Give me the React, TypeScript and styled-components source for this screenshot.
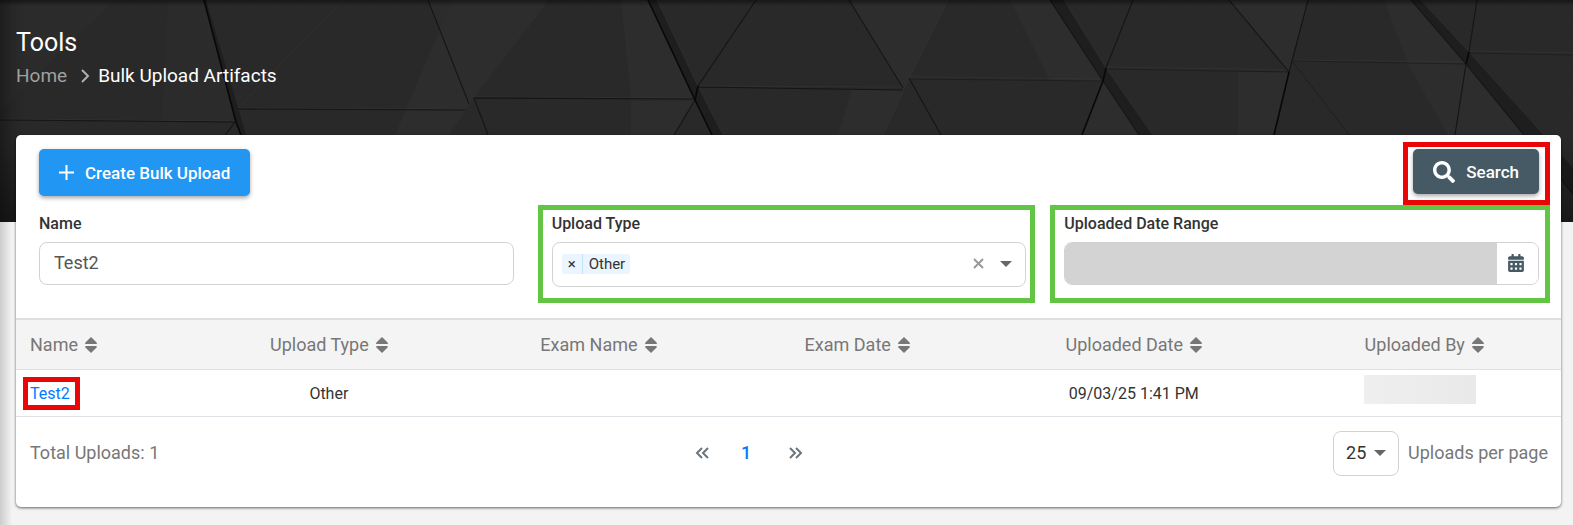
import React, { useState } from "react";
import styled, { createGlobalStyle } from "styled-components";
import { FaCalendarAlt, FaSearch } from "react-icons/fa";

const GlobalStyle = createGlobalStyle`
  *, *::before, *::after { box-sizing: border-box; }
  body {
    margin: 0;
    background: #f3f3f3;
    color: #333;
    font: 16px/24px Roboto, "Liberation Sans", sans-serif;
  }
  button, input, select { font: inherit; }
`;

const RED = "#ea0606";
const GREEN = "#62c544";

const Page = styled.div`
  position: relative;
  min-height: 100vh;
  padding-bottom: 18px;
`;

const EdgeShadow = styled.div`
  position: absolute;
  inset: 0 auto 0 0;
  width: 12px;
  background: linear-gradient(to right, rgba(0, 0, 0, 0.16), rgba(0, 0, 0, 0));
  pointer-events: none;
`;

const Banner = styled.div`
  position: absolute;
  inset: 0 0 auto 0;
  height: 222px;
  background: #292929;
  overflow: hidden;

  svg { display: block; width: 100%; height: 100%; }
`;

const PageHeader = styled.header`
  position: relative;
  padding: 27px 16px 0;
  height: 135px;
  color: #fff;
`;

const Title = styled.h1`
  margin: 0;
  font-size: 25px;
  line-height: 32px;
  font-weight: 400;
`;

const Breadcrumb = styled.nav`
  display: flex;
  align-items: center;
  gap: 14px;
  margin-top: 5px;
  font-size: 19px;
  line-height: 24px;

  a { color: #a0a0a0; text-decoration: none; }
  svg { display: block; margin-right: -6px; }
`;

const Card = styled.main`
  position: relative;
  margin: 0 12px 0 16px;
  background: #fff;
  border-radius: 5px;
  box-shadow: 0 1px 3px rgba(0, 0, 0, 0.6);
`;

const Filters = styled.form`
  padding: 14px 22px 31px 23px;
`;

const Toolbar = styled.div`
  display: flex;
  justify-content: space-between;
  align-items: flex-start;
  height: 63px;
`;

const Mark = styled.div<{ $color: string; $inset: string }>`
  position: relative;

  &::after {
    content: "";
    position: absolute;
    inset: ${(p) => p.$inset};
    border: 5px solid ${(p) => p.$color};
    pointer-events: none;
  }
`;

const ActionButton = styled.button<{ $bg: string; $height: number }>`
  display: flex;
  align-items: center;
  gap: 11px;
  height: ${(p) => p.$height}px;
  padding: 0 20px;
  border: 0;
  border-radius: 5px;
  background: ${(p) => p.$bg};
  color: #fff;
  font-size: 17px;
  font-weight: 500;
  box-shadow: 0 2px 4px rgba(0, 0, 0, 0.35);
  cursor: pointer;
`;

const FieldGrid = styled.div`
  display: grid;
  grid-template-columns: repeat(3, minmax(0, 1fr));
  column-gap: 38px;
  align-items: start;
`;

const Label = styled.label`
  display: block;
  margin-bottom: 6px;
  font-size: 16px;
  line-height: 24px;
  font-weight: 500;
`;

const TextInput = styled.input`
  display: block;
  width: 100%;
  height: 43px;
  padding: 0 14px 2px;
  border: 1px solid #d2d2d2;
  border-radius: 8px;
  background: #fff;
  color: #555;
  font-size: 18px;
`;

const MultiSelect = styled.div`
  display: flex;
  align-items: center;
  height: 45px;
  padding: 0 13px 2px 9px;
  border: 1px solid #d2d2d2;
  border-radius: 8px;
`;

const Tag = styled.span`
  display: flex;
  height: 20px;
  border-radius: 2px;
  background: #ebf5ff;
  font-size: 15px;
  line-height: 20px;

  button {
    width: 21px;
    padding: 0;
    border: 0;
    border-right: 1px solid #c2e0ff;
    background: none;
    color: #333;
    line-height: 20px;
  }
  span { padding: 0 5px 0 6px; }
`;

const TypeInput = styled.input`
  flex: 1;
  min-width: 0;
  border: 0;
  outline: 0;
  background: none;
`;

const PlainButton = styled.button`
  display: flex;
  padding: 0;
  border: 0;
  background: none;
  color: #999;
  cursor: pointer;

  & + & { margin-left: 16px; color: #666; }
`;

const DateGroup = styled.div`
  display: flex;
  height: 43px;
  border: 1px solid #d2d2d2;
  border-radius: 8px;
  overflow: hidden;

  input { flex: 1; min-width: 0; border: 0; background: #d3d3d3; }
  button {
    display: flex;
    align-items: center;
    justify-content: center;
    width: 41px;
    padding: 0 2px 2px 0;
    border: 0;
    background: #fff;
    color: #455a64;
  }
`;

const Table = styled.table`
  width: 100%;
  table-layout: fixed;
  border-collapse: collapse;
  text-align: center;

  th {
    height: 50px;
    padding: 2px 0 0;
    border-top: 2px solid #dfdfdf;
    border-bottom: 1px solid #dfe0e2;
    background: #f4f4f4;
    font-weight: 400;
  }
  td {
    height: 47px;
    padding: 2px 0 0;
    border-bottom: 1px solid #dee2e6;
    font-size: 16px;
  }
  th:first-child, td:first-child { padding-left: 14px; text-align: left; }
`;

const SortButton = styled.button`
  display: inline-flex;
  align-items: center;
  gap: 7px;
  padding: 0;
  border: 0;
  background: none;
  color: #777;
  font-size: 18px;
  line-height: 24px;
  cursor: pointer;
`;

const RowLink = styled.a`
  color: #007bff;
  text-decoration: none;
`;

const InlineMark = styled(Mark)`
  display: inline-block;
`;

const RedactedCell = styled.div`
  display: flex;
  justify-content: center;
  padding: 0 8px 8px 0;
`;

const Redacted = styled.div`
  width: 112px;
  height: 29px;
  background: linear-gradient(to right, #f0efef, #e9e9e9);
`;

const Footer = styled.footer`
  display: flex;
  justify-content: space-between;
  align-items: center;
  padding: 14px 13px 31px 14px;
  color: #777;
  font-size: 18px;
  line-height: 24px;
`;

const Pager = styled.nav`
  display: flex;
  align-items: center;
  gap: 32px;
  padding-left: 6px;
  color: #6c757d;

  a { display: flex; color: inherit; text-decoration: none; }
  a[aria-current] { padding-right: 6px; color: #007bff; font-weight: 500; }
`;

const PageSize = styled.label`
  display: flex;
  justify-content: flex-end;
  align-items: center;
  gap: 9px;
`;

const SelectBox = styled.span`
  display: grid;
  align-items: center;
  width: 66px;
  height: 45px;

  select, svg { grid-area: 1 / 1; }
  select {
    width: 100%;
    height: 100%;
    padding: 0 12px;
    appearance: none;
    border: 1px solid #d2d2d2;
    border-radius: 8px;
    background: #fff;
    color: #333;
  }
  svg { justify-self: end; margin-right: 13px; pointer-events: none; color: #666; }
`;

const Caret = () => (
  <svg width="12" height="6" viewBox="0 0 12 6" aria-hidden="true">
    <path d="M0 0H12L6 6Z" fill="currentColor" />
  </svg>
);

const SortIcon = () => (
  <svg width="12" height="16" viewBox="0 0 12 16" aria-hidden="true">
    <path d="M6 0L11.6 5.6Q12.4 7 11 7H1Q-.4 7 .4 5.6ZM6 16L.4 10.4Q-.4 9 1 9H11Q12.4 9 11.6 10.4Z" fill="currentColor" />
  </svg>
);

const DoubleChevron = ({ flip }: { flip?: boolean }) => (
  <svg width="14" height="12" viewBox="0 0 14 12" fill="none" stroke="currentColor" strokeWidth="2" aria-hidden="true">
    <path d={flip ? "M1 1L6 6L1 11M7 1L12 6L7 11" : "M7 1L2 6L7 11M13 1L8 6L13 11"} />
  </svg>
);

const Facets = () => (
  <svg viewBox="0 0 1573 222" preserveAspectRatio="xMidYMin slice" aria-hidden="true">
    <defs>
      <pattern id="weave" width="3" height="3" patternUnits="userSpaceOnUse">
        <path d="M0 3L3 0" stroke="#222" strokeWidth="1" />
      </pattern>
      <linearGradient id="top" x1="0" y1="0" x2="0" y2="1">
        <stop offset="0" stopColor="#000" stopOpacity=".45" />
        <stop offset="1" stopColor="#000" stopOpacity="0" />
      </linearGradient>
      <linearGradient id="side" x1="0" y1="0" x2="1" y2="0">
        <stop offset="0" stopColor="#000" stopOpacity=".2" />
        <stop offset="1" stopColor="#000" stopOpacity="0" />
      </linearGradient>
      <linearGradient id="bottom" x1="0" y1="0" x2="0" y2="1">
        <stop offset="0" stopColor="#000" stopOpacity="0" />
        <stop offset="1" stopColor="#000" stopOpacity=".4" />
      </linearGradient>
    </defs>
    <rect width="1573" height="222" fill="#2a2a2a" />
    <rect width="1573" height="222" fill="url(#weave)" opacity=".4" />
    <g fill="#2d2d2d">
      <path d="M0 0H115L0 110Z" opacity=".5" />
      <path d="M168 0H204L236 121L162 121Z" opacity=".5" />
      <path d="M452 0H549L474 98L449 135H395Z" />
      <path d="M428 0H455L405 110H465L469 104Z" opacity=".7" />
      <path d="M621 0H648L695 100H631Z" />
      <path d="M631 101H695L674 135H631Z" />
      <path d="M866 0H948L909 78L883 135H838L852 90H903L849 0Z" />
      <path d="M1010 0H1050L1103 81H1050Z" />
      <path d="M1103 81L1139 135H1082Z" />
      <path d="M1229 0H1308L1292 61L1289 72Z" />
      <path d="M1238 72H1289L1274 135H1238Z" />
      <path d="M1384 0H1411L1466 64H1408Z" />
      <path d="M1408 64H1466L1455 135H1448Z" />
      <path d="M1466 64L1524 135H1455Z" />
    </g>
    <g fill="#1e1e1e">
      <path d="M204 0H206L238 108L246 135H241L235 122Z" />
      <path d="M648 0H657L698 86L723 135H712L695 100Z" />
      <path d="M1050 0H1064L1106 68L1153 135H1139L1103 81Z" />
      <path d="M1411 0H1421L1469 52L1544 135L1573 167V194L1524 135L1466 64Z" />
    </g>
    <g fill="none" stroke="#383838" strokeWidth="1" opacity=".5">
      <path d="M343 0L238 108M0 119L235 121M238 108L465 109M474 97L695 98M698 86L903 87" />
      <path d="M948 0L909 78L883 135M909 77L1103 79M1106 67L1289 70M1293 60L1466 62M1469 51L1573 53" />
      <path d="M657 0L698 86L723 135M1064 0L1106 68L1153 135M1421 0L1469 52L1544 135L1573 167" />
    </g>
    <g fill="none" stroke="#151515" strokeWidth="1.1">
      <path d="M0 120L235 122L225 135M238 109L465 110M428 0L469 104M488 135L474 98L695 99" />
      <path d="M756 0L698 86L695 100L674 135M849 0L903 88M698 87L903 90M941 135L909 78" />
      <path d="M1050 0L1103 81L1139 135M1133 0L1106 68M1229 0L1289 72M1308 0L1292 61L1289 72" />
      <path d="M1411 0L1466 64L1524 135L1573 194M1477 0L1469 52L1466 64L1455 135" />
    </g>
    <g fill="none" stroke="#1b1b1b" strokeWidth="1" opacity=".7">
      <path d="M909 79L1103 81M1106 69L1289 72M1293 61L1466 64M1293 62L1349 135M1469 53L1573 55" />
    </g>
    <g fill="none" stroke="#080808" strokeWidth="1.6">
      <path d="M204 0L236 122L241 135M648 0L695 100L712 135M698 86L695 100M1106 68L1103 81L1082 135M1289 72L1274 135M1469 52L1466 64" />
    </g>
    <rect y="135" width="1573" height="87" fill="url(#bottom)" />
    <rect width="1573" height="6" fill="url(#top)" />
    <rect width="26" height="222" fill="url(#side)" />
  </svg>
);

const COLUMNS = [
  { name: "Name", width: "11.6%" },
  { name: "Upload Type", width: "17.3%" },
  { name: "Exam Name", width: "17.6%" },
  { name: "Exam Date", width: "15.9%" },
  { name: "Uploaded Date", width: "19.9%" },
  { name: "Uploaded By", width: "17.7%" },
];

export default function App() {
  const [name, setName] = useState("Test2");
  return (
    <Page>
      <GlobalStyle />
      <Banner><Facets /></Banner>
      <EdgeShadow />
      <PageHeader>
        <Title>Tools</Title>
        <Breadcrumb aria-label="Breadcrumb">
          <a href="#home">Home</a>
          <svg width="9" height="14" viewBox="0 0 9 14" fill="none" stroke="#b0b0b0" strokeWidth="2" aria-hidden="true">
            <path d="M1 1L7 7L1 13" />
          </svg>
          <span aria-current="page">Bulk Upload Artifacts</span>
        </Breadcrumb>
      </PageHeader>
      <Card>
        <Filters onSubmit={(e) => e.preventDefault()}>
          <Toolbar>
            <ActionButton type="button" $bg="#2196f3" $height={47}>
              <svg width="15" height="15" viewBox="0 0 15 15" stroke="currentColor" strokeWidth="2" aria-hidden="true">
                <path d="M7.5 0V15M0 7.5H15" />
              </svg>
              Create Bulk Upload
            </ActionButton>
            <Mark $color={RED} $inset="-7px -11px -11px -10px">
              <ActionButton type="submit" $bg="#455a64" $height={45}>
                <FaSearch size={22} aria-hidden="true" />
                Search
              </ActionButton>
            </Mark>
          </Toolbar>
          <FieldGrid>
            <div>
              <Label htmlFor="name">Name</Label>
              <TextInput id="name" value={name} onChange={(e) => setName(e.target.value)} />
            </div>
            <Mark $color={GREEN} $inset="-7px -9px -16px -14px">
              <Label htmlFor="type">Upload Type</Label>
              <MultiSelect>
                <Tag>
                  <button type="button" aria-label="Remove Other">×</button>
                  <span>Other</span>
                </Tag>
                <TypeInput id="type" />
                <PlainButton type="button" aria-label="Clear all">
                  <svg width="11" height="11" viewBox="0 0 11 11" stroke="currentColor" strokeWidth="2" aria-hidden="true">
                    <path d="M1 1L10 10M10 1L1 10" />
                  </svg>
                </PlainButton>
                <PlainButton type="button" aria-label="Open list"><Caret /></PlainButton>
              </MultiSelect>
            </Mark>
            <Mark $color={GREEN} $inset="-7px -11px -18px -14px">
              <Label htmlFor="range">Uploaded Date Range</Label>
              <DateGroup>
                <input id="range" readOnly />
                <button type="button" aria-label="Open calendar"><FaCalendarAlt size={18} /></button>
              </DateGroup>
            </Mark>
          </FieldGrid>
        </Filters>
        <Table>
          <colgroup>
            {COLUMNS.map((c) => <col key={c.name} style={{ width: c.width }} />)}
          </colgroup>
          <thead>
            <tr>
              {COLUMNS.map((c) => (
                <th key={c.name} scope="col">
                  <SortButton type="button">{c.name}<SortIcon /></SortButton>
                </th>
              ))}
            </tr>
          </thead>
          <tbody>
            <tr>
              <td>
                <InlineMark $color={RED} $inset="-5px -10px -4px -7px">
                  <RowLink href="#test2">Test2</RowLink>
                </InlineMark>
              </td>
              <td>Other</td>
              <td />
              <td />
              <td>09/03/25 1:41 PM</td>
              <td><RedactedCell><Redacted /></RedactedCell></td>
            </tr>
          </tbody>
        </Table>
        <Footer>
          <span>Total Uploads: 1</span>
          <Pager aria-label="Pages">
            <a href="#prev" aria-label="Previous"><DoubleChevron /></a>
            <a href="#1" aria-current="page">1</a>
            <a href="#next" aria-label="Next"><DoubleChevron flip /></a>
          </Pager>
          <PageSize>
            <SelectBox>
              <select defaultValue="25"><option>25</option></select>
              <Caret />
            </SelectBox>
            Uploads per page
          </PageSize>
        </Footer>
      </Card>
    </Page>
  );
}
